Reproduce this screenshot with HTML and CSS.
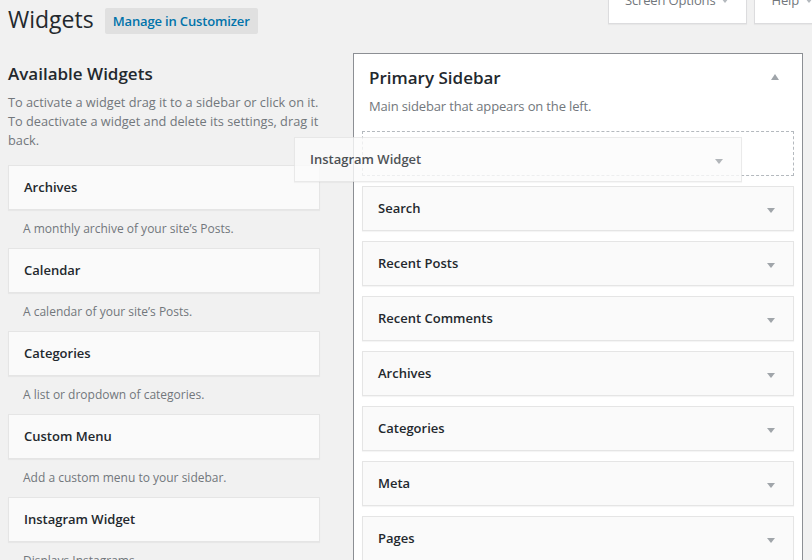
FILE: index.html
```html
<!DOCTYPE html>
<html lang="en">
<head>
<meta charset="utf-8">
<title>Widgets</title>
<link rel="stylesheet" href="styles.css">
</head>
<body>
<div class="wrap">
  <div class="topbar">
    <div class="title-row">
      <h1 class="page-title">Widgets</h1>
      <a class="title-action" href="#">Manage in Customizer</a>
    </div>
    <div class="screen-links">
      <button class="meta-btn" type="button">Screen Options <span class="caret"></span></button>
      <button class="meta-btn" type="button">Help <span class="caret"></span></button>
    </div>
  </div>

  <div class="columns">
    <div class="available">
      <h2 class="available-title">Available Widgets</h2>
      <p class="intro">To activate a widget drag it to a sidebar or click on it. To deactivate a widget and delete its settings, drag it back.</p>
      <div class="widget-list">
        <div class="widget-item">
          <div class="widget">Archives</div>
          <div class="widget-desc">A monthly archive of your site’s Posts.</div>
        </div>
        <div class="widget-item">
          <div class="widget">Calendar</div>
          <div class="widget-desc">A calendar of your site’s Posts.</div>
        </div>
        <div class="widget-item">
          <div class="widget">Categories</div>
          <div class="widget-desc">A list or dropdown of categories.</div>
        </div>
        <div class="widget-item">
          <div class="widget">Custom Menu</div>
          <div class="widget-desc">Add a custom menu to your sidebar.</div>
        </div>
        <div class="widget-item">
          <div class="widget">Instagram Widget</div>
          <div class="widget-desc">Displays Instagrams</div>
        </div>
      </div>
    </div>

    <div class="sidebar">
      <div class="sidebar-head">
        <div class="sidebar-title-row">
          <h2 class="sidebar-title">Primary Sidebar</h2>
          <span class="caret-up"></span>
        </div>
        <p class="sidebar-desc">Main sidebar that appears on the left.</p>
      </div>
      <div class="sidebar-list">
        <div class="placeholder"></div>
        <div class="widget widget-in"><span>Search</span><span class="caret-down"></span></div>
        <div class="widget widget-in"><span>Recent Posts</span><span class="caret-down"></span></div>
        <div class="widget widget-in"><span>Recent Comments</span><span class="caret-down"></span></div>
        <div class="widget widget-in"><span>Archives</span><span class="caret-down"></span></div>
        <div class="widget widget-in"><span>Categories</span><span class="caret-down"></span></div>
        <div class="widget widget-in"><span>Meta</span><span class="caret-down"></span></div>
        <div class="widget widget-in"><span>Pages</span><span class="caret-down"></span></div>
      </div>
    </div>
  </div>

  <div class="widget widget-in drag-helper"><span>Instagram Widget</span><span class="caret-down"></span></div>
</div>
</body>
</html>
```

FILE: styles.css
```css
html, body {
  margin: 0;
  height: 560px;
  overflow: hidden;
}

body {
  background: #f1f1f1;
  font-family: "Open Sans", "Noto Sans", sans-serif;
  font-size: 13px;
  color: #444;
}

.wrap {
  position: relative;
  padding-left: 8px;
}

.topbar {
  display: flex;
  justify-content: space-between;
  align-items: flex-start;
}

.title-row {
  display: flex;
  align-items: flex-start;
  gap: 11px;
  padding-top: 8px;
}

.page-title {
  margin: -2px 0 0;
  font-size: 23px;
  font-weight: 400;
  line-height: 26px;
  color: #23282d;
}

.title-action {
  display: block;
  height: 26px;
  line-height: 26px;
  padding: 0 8px;
  background: #e0e0e0;
  border-radius: 2px;
  color: #0073aa;
  font-weight: 600;
  letter-spacing: -0.15px;
  text-decoration: none;
}

.screen-links {
  display: flex;
  gap: 7px;
  margin-top: -14px;
  margin-right: -19px;
}

.meta-btn {
  display: flex;
  align-items: center;
  padding: 3px 17px 12px 16px;
  line-height: 22px;
  background: #fff;
  border: 1px solid #dcdcde;
  border-top: none;
  box-shadow: 0 1px 1px rgba(0, 0, 0, 0.04);
  font-family: inherit;
  font-size: 13px;
  letter-spacing: -0.15px;
  color: #72777c;
}

.caret {
  display: inline-block;
  margin-left: 6px;
  border-left: 4px solid transparent;
  border-right: 4px solid transparent;
  border-top: 5px solid #b4b9be;
}

.columns {
  display: grid;
  grid-template-columns: 312px 450px;
  column-gap: 33px;
  align-items: start;
  margin-top: 19px;
}

.available-title {
  margin: 10px 0 8px;
  font-size: 17px;
  font-weight: 600;
  line-height: 22px;
  color: #23282d;
}

.intro {
  margin: 0 0 15px;
  font-size: 12.75px;
  line-height: 19px;
  color: #72777c;
}

.widget {
  box-sizing: border-box;
  height: 45px;
  display: flex;
  align-items: center;
  padding: 0 15px 2px;
  background: #fafafa;
  border: 1px solid #e5e5e5;
  box-shadow: 0 1px 1px rgba(0, 0, 0, 0.04);
  font-weight: 600;
  color: #23282d;
}

.widget-desc {
  padding: 10px 15px 0;
  margin-bottom: 10px;
  font-size: 12px;
  line-height: 18px;
  color: #72777c;
}

.sidebar {
  background: #fff;
  border: 1px solid #8c8f94;
  min-height: 600px;
}

.sidebar-head {
  padding: 13px 23px 0 15px;
}

.sidebar-title-row {
  display: flex;
  justify-content: space-between;
  align-items: center;
}

.sidebar-title {
  margin: 0 0 8px;
  font-size: 17px;
  font-weight: 600;
  line-height: 22px;
  color: #23282d;
}

.caret-up {
  display: block;
  margin-top: -11px;
  border-left: 4px solid transparent;
  border-right: 4px solid transparent;
  border-bottom: 6px solid #a0a5aa;
}

.sidebar-desc {
  margin: 0 0 15px;
  letter-spacing: -0.15px;
  line-height: 19px;
  color: #72777c;
}

.sidebar-list {
  display: flex;
  flex-direction: column;
  gap: 10px;
  padding: 0 8px;
}

.placeholder {
  box-sizing: border-box;
  height: 45px;
  border: 1px dashed #b4b9be;
}

.widget-in {
  justify-content: space-between;
  padding-right: 18px;
}

.caret-down {
  display: block;
  margin-top: 5px;
  border-left: 4px solid transparent;
  border-right: 4px solid transparent;
  border-top: 5px solid #a0a5aa;
}

.drag-helper {
  position: absolute;
  left: 294px;
  top: 137px;
  width: 448px;
  opacity: 0.8;
  background: #fcfcfc;
}
```
